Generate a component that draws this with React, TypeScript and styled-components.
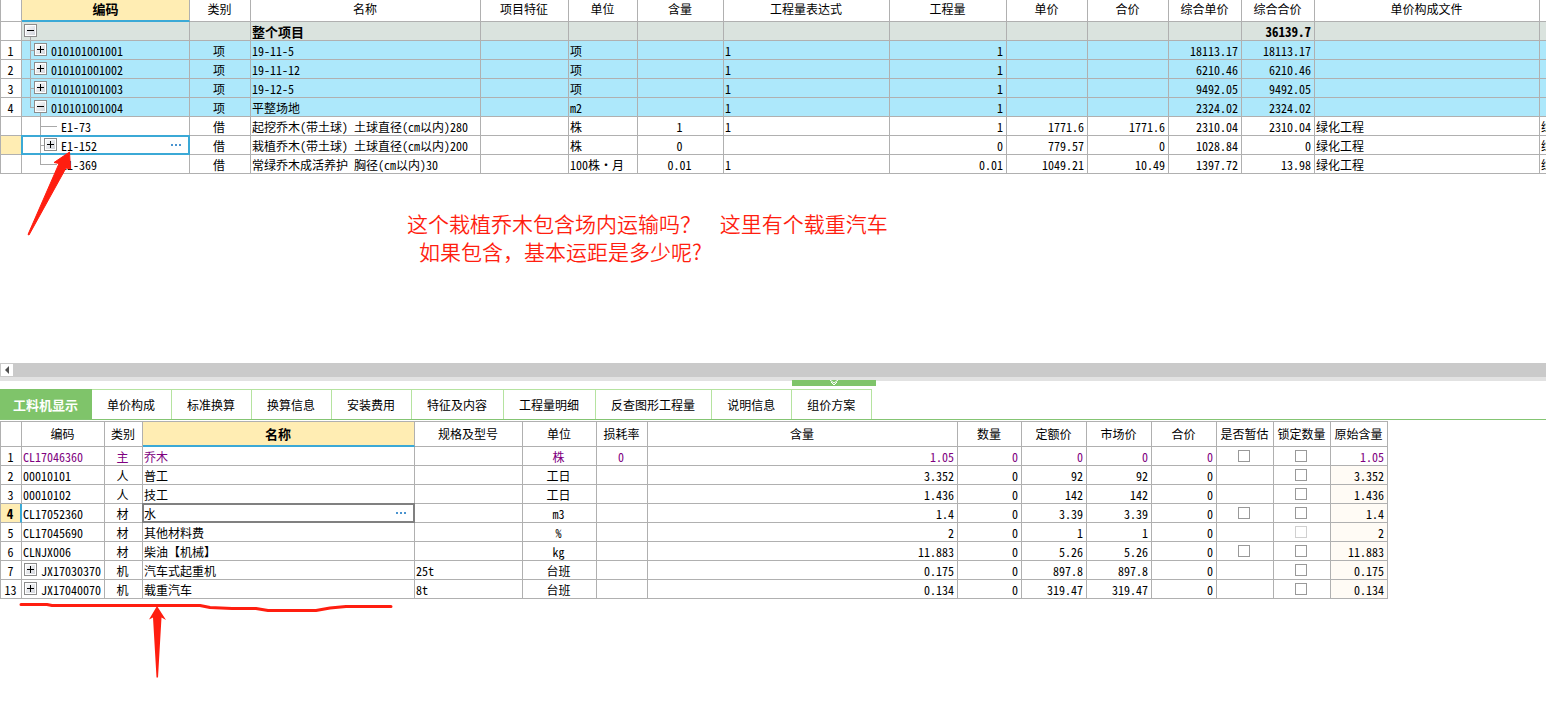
import React from "react";
import styled, { createGlobalStyle, css } from "styled-components";

const LINE = "#b0b0b0";
const BLUE = "#3ba9d6";
const RED = "#ff1e10";

const GlobalStyle = createGlobalStyle`
  *, *::before, *::after { box-sizing: border-box; }
  body {
    margin: 0;
    background: #fff;
    color: #000;
    font: 12px/16px "Noto Sans CJK SC", sans-serif;
    font-feature-settings: "hwid";
  }
`;

const Page = styled.main`
  position: relative;
  overflow: hidden;
  padding-bottom: 120px;
`;

const UpperPane = styled.section`
  position: relative;
  min-height: 363px;
`;

const Grid = styled.table<{ $width?: string }>`
  table-layout: fixed;
  width: ${(p) => p.$width ?? "100%"};
  border-collapse: separate;
  border-spacing: 0;
`;

type Tone = "plain" | "summary" | "section" | "main";

const Row = styled.tr<{ $tone?: Tone }>`
  background: ${(p) =>
    p.$tone === "summary" ? "#dae3de" : p.$tone === "section" ? "#ade8fb" : "#fff"};
  color: ${(p) => (p.$tone === "main" ? "#800080" : "#000")};
  font-weight: ${(p) => (p.$tone === "summary" ? 700 : 400)};
  font-size: ${(p) => (p.$tone === "summary" ? 13 : 12)}px;
`;

const HeadCell = styled.th<{ $active?: boolean; $tall?: boolean }>`
  height: ${(p) => (p.$tall ? 26 : 22)}px;
  padding: ${(p) => (p.$tall ? "0 1px 0 0" : p.$active ? "0 0 2px 0" : "0 1px 4px 0")};
  overflow: hidden;
  white-space: nowrap;
  text-align: center;
  font-size: ${(p) => (p.$active ? 13 : 12)}px;
  font-weight: ${(p) => (p.$active ? 700 : 400)};
  line-height: 16px;
  background: ${(p) => (p.$active ? "#ffedb3" : "#fff")};
  border-right: 1px solid ${LINE};
  border-bottom: ${(p) => (p.$active ? `2px solid ${BLUE}` : `1px solid ${LINE}`)};
  border-top: ${(p) => (p.$tall ? `1px solid ${LINE}` : "0")};
  &:first-child { border-left: 1px solid ${LINE}; }
`;

const Cell = styled.td<{ $align?: string; $shade?: boolean }>`
  height: 19px;
  padding: 2px 3px 0 1px;
  overflow: hidden;
  white-space: nowrap;
  line-height: 16px;
  text-align: ${(p) => p.$align ?? "left"};
  border-right: 1px solid ${LINE};
  border-bottom: 1px solid ${LINE};
  ${(p) => p.$shade && css`background: #fffbf5;`}
`;

const OpenEndedGrid = styled(Grid)`
  th:last-child,
  td:last-child {
    border-right: 0;
  }
`;

const IndexCell = styled.th<{ $current?: boolean; $mark?: boolean }>`
  height: 19px;
  padding: 2px 1px 0 0;
  line-height: 16px;
  text-align: center;
  color: #000;
  font-size: ${(p) => (p.$current ? 13 : 12)}px;
  font-weight: ${(p) => (p.$current ? 700 : 400)};
  background: ${(p) => (p.$current ? "#ffedb3" : "#fff")};
  border-left: 1px solid ${LINE};
  border-right: ${(p) => (p.$mark ? `2px solid ${BLUE}` : `1px solid ${LINE}`)};
  border-bottom: 1px solid ${LINE};
`;

const CellBody = styled.div`
  position: relative;
  display: flex;
  height: 16px;
`;

const FocusFrame = styled.div<{ $color: string }>`
  position: absolute;
  inset: -3px -4px -1px -2px;
  border: 2px solid ${(p) => p.$color};
  pointer-events: none;
`;

const FocusCell = styled(Cell)`
  overflow: visible;
`;

const Expander = styled.button`
  flex: none;
  display: block;
  width: 13px;
  height: 13px;
  padding: 0;
  border: 1px solid #8c8c8c;
  background: linear-gradient(135deg, #ffffff, #cdd0d8);
  box-shadow: inset 0 0 0 1px #fff;
  svg { display: block; }
`;

const Tree = styled.svg`
  position: absolute;
  left: -1px;
  top: -2px;
  pointer-events: none;
`;

const Branch = styled.span<{ $left: number }>`
  display: flex;
  align-items: flex-start;
  gap: 4px;
  height: 16px;
  padding-left: ${(p) => p.$left}px;
  position: relative;
`;

const More = styled.button`
  position: absolute;
  right: 5px;
  top: 4px;
  display: flex;
  gap: 2px;
  padding: 2px 0;
  border: 0;
  background: none;
  i { width: 2px; height: 2px; background: #4a94cf; }
`;

const Check = styled.input`
  appearance: none;
  display: block;
  width: 12px;
  height: 12px;
  margin: 0 auto 2px;
  border: 1px solid #999;
  background: #fff;
  &:disabled { border-color: #d0d0d0; }
`;

const Note = styled.p`
  margin: 35px 0 0 407px;
  color: ${RED};
  font-size: 21px;
  line-height: 28px;
  font-weight: 350;
  white-space: pre;
  font-feature-settings: normal;
`;

const NoteLine = styled.span<{ $indent?: boolean }>`
  display: block;
  padding-left: ${(p) => (p.$indent ? 12 : 0)}px;
`;

const ScrollTrack = styled.div`
  display: flex;
  height: 14px;
  background: #cacaca;
`;

const ScrollButton = styled.button`
  width: 14px;
  padding: 0;
  border: 1px solid #cacaca;
  background: #fff;
  svg { display: block; }
`;

const Splitter = styled.div`
  position: relative;
  height: 4px;
  background: #e2e2e2;
`;

const Handle = styled.button`
  position: absolute;
  left: 792px;
  top: 3px;
  width: 84px;
  height: 6px;
  padding: 0;
  border: 0;
  background: #7fc46a;
  svg { display: block; margin: 0 auto; }
`;

const TabBar = styled.nav`
  display: flex;
  margin-top: 8px;
  border-bottom: 1px solid #84c573;
`;

const Tab = styled.button<{ $active?: boolean }>`
  height: 30px;
  padding: 0 16px 0 15px;
  border: 0;
  border-top: 1px solid #b5e3a0;
  border-right: 1px solid #b5e3a0;
  background: #fff;
  color: #000;
  font: inherit;
  font-feature-settings: inherit;
  white-space: nowrap;
  ${(p) =>
    p.$active &&
    css`
      padding: 0 13px;
      background: #7fc46a;
      border-color: #7fc46a;
      color: #fff;
      font-size: 13px;
      font-weight: 700;
    `}
`;

const LowerPane = styled.section`
  position: relative;
  margin-top: 1px;
`;

const Ink = styled.svg`
  position: absolute;
  pointer-events: none;
`;

const ArrowUpper = styled(Ink)`
  left: 24px;
  top: 150px;
`;

const InkLower = styled(Ink)`
  left: 16px;
  top: 178px;
`;

function Toggle({ open, label }: { open?: boolean; label: string }) {
  return (
    <Expander type="button" aria-label={label} aria-expanded={!!open}>
      <svg width="11" height="11" viewBox="0 0 11 11" shapeRendering="crispEdges">
        <path d={open ? "M2 5.5H9" : "M2 5.5H9M5.5 2V9"} stroke="#000" fill="none" />
      </svg>
    </Expander>
  );
}

function Dots() {
  return (
    <More type="button" aria-label="更多">
      <i /><i /><i />
    </More>
  );
}

type UpperRow = {
  no: string;
  tone?: Tone;
  code: string;
  indent: number;
  toggle?: "open" | "closed";
  lines: string;
  current?: boolean;
  values: string[];
};

const upperHeads = ["类别", "名称", "项目特征", "单位", "含量", "工程量表达式", "工程量", "单价", "合价", "综合单价", "综合合价", "单价构成文件", ""];
const upperWidths = [22, 168, 61, 230, 88, 69, 86, 166, 117, 81, 81, 73, 73, 225];
const upperAlign = ["center", "left", "left", "left", "center", "left", "right", "right", "right", "right", "right", "left", "left"];

const upperRows: UpperRow[] = [
  { no: "", tone: "summary", code: "", indent: 1, toggle: "open", lines: "M8.5 15V18", values: ["", "整个项目", "", "", "", "", "", "", "", "", "36139.7", "", ""] },
  { no: "1", tone: "section", code: "010101001001", indent: 11, toggle: "closed", lines: "M8.5 0V19M8.5 9.5H12", values: ["项", "19-11-5", "", "项", "", "1", "1", "", "", "18113.17", "18113.17", "", ""] },
  { no: "2", tone: "section", code: "010101001002", indent: 11, toggle: "closed", lines: "M8.5 0V19M8.5 9.5H12", values: ["项", "19-11-12", "", "项", "", "1", "1", "", "", "6210.46", "6210.46", "", ""] },
  { no: "3", tone: "section", code: "010101001003", indent: 11, toggle: "closed", lines: "M8.5 0V19M8.5 9.5H12", values: ["项", "19-12-5", "", "项", "", "1", "1", "", "", "9492.05", "9492.05", "", ""] },
  { no: "4", tone: "section", code: "010101001004", indent: 11, toggle: "open", lines: "M8.5 0V9.5H12M18.5 15V19", values: ["项", "平整场地", "", "m2", "", "1", "1", "", "", "2324.02", "2324.02", "", ""] },
  { no: "", code: "E1-73", indent: 38, lines: "M18.5 0V19M18.5 9.5H35", values: ["借", "起挖乔木(带土球) 土球直径(cm以内)280", "", "株", "1", "1", "1", "1771.6", "1771.6", "2310.04", "2310.04", "绿化工程", "绿"] },
  { no: "", code: "E1-152", indent: 21, toggle: "closed", current: true, lines: "M18.5 0V19M18.5 9.5H22", values: ["借", "栽植乔木(带土球) 土球直径(cm以内)200", "", "株", "0", "", "0", "779.57", "0", "1028.84", "0", "绿化工程", "绿"] },
  { no: "", code: "E1-369", indent: 38, lines: "M18.5 0V9.5H35", values: ["借", "常绿乔木成活养护 胸径(cm以内)30", "", "100株·月", "0.01", "1", "0.01", "1049.21", "10.49", "1397.72", "13.98", "绿化工程", "绿"] },
];

const tabs = ["工料机显示", "单价构成", "标准换算", "换算信息", "安装费用", "特征及内容", "工程量明细", "反查图形工程量", "说明信息", "组价方案"];

const lowerHeads = ["编码", "类别", "名称", "规格及型号", "单位", "损耗率", "含量", "数量", "定额价", "市场价", "合价", "是否暂估", "锁定数量", "原始含量"];
const lowerWidths = [22, 83, 38, 272, 108, 74, 51, 310, 64, 65, 65, 65, 57, 57, 57];

type LowerRow = {
  no: string;
  code: string;
  nested?: boolean;
  kind: string;
  name: string;
  spec?: string;
  unit: string;
  loss?: string;
  amount: string;
  price: string;
  estimate?: boolean;
  locked?: boolean;
  main?: boolean;
  current?: boolean;
};

const lowerRows: LowerRow[] = [
  { no: "1", code: "CL17046360", kind: "主", name: "乔木", unit: "株", loss: "0", amount: "1.05", price: "0", estimate: true, main: true },
  { no: "2", code: "00010101", kind: "人", name: "普工", unit: "工日", amount: "3.352", price: "92" },
  { no: "3", code: "00010102", kind: "人", name: "技工", unit: "工日", amount: "1.436", price: "142" },
  { no: "4", code: "CL17052360", kind: "材", name: "水", unit: "m3", amount: "1.4", price: "3.39", estimate: true, current: true },
  { no: "5", code: "CL17045690", kind: "材", name: "其他材料费", unit: "%", amount: "2", price: "1", locked: true },
  { no: "6", code: "CLNJX006", kind: "材", name: "柴油【机械】", unit: "kg", amount: "11.883", price: "5.26", estimate: true },
  { no: "7", code: "JX17030370", nested: true, kind: "机", name: "汽车式起重机", spec: "25t", unit: "台班", amount: "0.175", price: "897.8" },
  { no: "13", code: "JX17040070", nested: true, kind: "机", name: "载重汽车", spec: "8t", unit: "台班", amount: "0.134", price: "319.47" },
];

function ProjectTable() {
  return (
    <OpenEndedGrid>
      <colgroup>
        {upperWidths.map((w, i) => <col key={i} width={w} />)}
        <col />
      </colgroup>
      <thead>
        <tr>
          <HeadCell />
          <HeadCell $active>编码</HeadCell>
          {upperHeads.map((h, i) => <HeadCell key={i}>{h}</HeadCell>)}
        </tr>
      </thead>
      <tbody>
        {upperRows.map((r, i) => {
          const CodeCell = r.current ? FocusCell : Cell;
          return (
            <Row key={i} $tone={r.tone}>
              <IndexCell scope="row" $current={r.current}>{r.no}</IndexCell>
              <CodeCell>
                <CellBody>
                  <Tree width="40" height="19" viewBox="0 0 40 19" shapeRendering="crispEdges">
                    <path d={r.lines} stroke="#a9a9a9" fill="none" />
                  </Tree>
                  <Branch $left={r.indent}>
                    {r.toggle && <Toggle open={r.toggle === "open"} label={r.code || "整个项目"} />}
                    {r.code}
                  </Branch>
                  {r.current && <FocusFrame $color={BLUE} />}
                  {r.current && <Dots />}
                </CellBody>
              </CodeCell>
              {r.values.map((v, j) => <Cell key={j} $align={upperAlign[j]}>{v}</Cell>)}
            </Row>
          );
        })}
      </tbody>
    </OpenEndedGrid>
  );
}

function ResourceTable() {
  return (
    <Grid $width="1388px">
      <colgroup>
        {lowerWidths.map((w, i) => <col key={i} width={w} />)}
      </colgroup>
      <thead>
        <tr>
          <HeadCell $tall />
          {lowerHeads.map((h) => <HeadCell key={h} $tall $active={h === "名称"}>{h}</HeadCell>)}
        </tr>
      </thead>
      <tbody>
        {lowerRows.map((r) => {
          const NameCell = r.current ? FocusCell : Cell;
          return (
            <Row key={r.no} $tone={r.main ? "main" : "plain"}>
              <IndexCell scope="row" $current={r.current} $mark={r.current}>{r.no}</IndexCell>
              <Cell>
                {r.nested ? <Branch $left={1}><Toggle label={r.name} />{r.code}</Branch> : r.code}
              </Cell>
              <Cell $align="center">{r.kind}</Cell>
              <NameCell>
                <CellBody>
                  {r.name}
                  {r.current && <FocusFrame $color="#808080" />}
                  {r.current && <Dots />}
                </CellBody>
              </NameCell>
              <Cell>{r.spec}</Cell>
              <Cell $align="center">{r.unit}</Cell>
              <Cell $align="center">{r.loss}</Cell>
              <Cell $align="right">{r.amount}</Cell>
              <Cell $align="right">0</Cell>
              <Cell $align="right">{r.price}</Cell>
              <Cell $align="right">{r.price}</Cell>
              <Cell $align="right">0</Cell>
              <Cell>{r.estimate && <Check type="checkbox" aria-label={`${r.name} 是否暂估`} />}</Cell>
              <Cell><Check type="checkbox" disabled={r.locked} aria-label={`${r.name} 锁定数量`} /></Cell>
              <Cell $align="right" $shade={!r.main}>{r.amount}</Cell>
            </Row>
          );
        })}
      </tbody>
    </Grid>
  );
}

export default function App() {
  return (
    <Page>
      <GlobalStyle />
      <UpperPane>
        <ProjectTable />
        <Note>
          <NoteLine>这个栽植乔木包含场内运输吗？    这里有个载重汽车</NoteLine>
          <NoteLine $indent>如果包含，基本运距是多少呢?</NoteLine>
        </Note>
        <ArrowUpper width="50" height="90" viewBox="24 150 50 90">
          <path d="M69.5 152L54 162.5L59 163.5L28 234.5L29 235L66 168L70.5 169Z" fill={RED} stroke={RED} strokeWidth="1" strokeLinejoin="round" />
        </ArrowUpper>
      </UpperPane>
      <ScrollTrack>
        <ScrollButton type="button" aria-label="向左滚动">
          <svg width="12" height="12" viewBox="0 0 12 12"><path d="M8 2V10L4 6Z" fill="#505050" /></svg>
        </ScrollButton>
      </ScrollTrack>
      <Splitter>
        <Handle type="button" aria-label="折叠面板">
          <svg width="10" height="6" viewBox="0 0 10 6"><path d="M1 0L5 3L9 0M2 2L5 5L8 2" stroke="#fff" fill="none" /></svg>
        </Handle>
      </Splitter>
      <TabBar>
        {tabs.map((t, i) => <Tab key={t} type="button" $active={i === 0}>{t}</Tab>)}
      </TabBar>
      <LowerPane>
        <ResourceTable />
        <InkLower width="382" height="84" viewBox="16 599 382 84">
          <path d="M21 604.5H47L52 605.5H200L210 607.5L232 608.5H256L268 610.5H316L330 608L346 606.5H391" stroke={RED} strokeWidth="3" strokeLinecap="round" strokeLinejoin="round" fill="none" />
          <path d="M157 606L149 619.5L153 617.5L156.5 677.5H158L161.5 617.5L166 620Z" fill={RED} />
        </InkLower>
      </LowerPane>
    </Page>
  );
}
